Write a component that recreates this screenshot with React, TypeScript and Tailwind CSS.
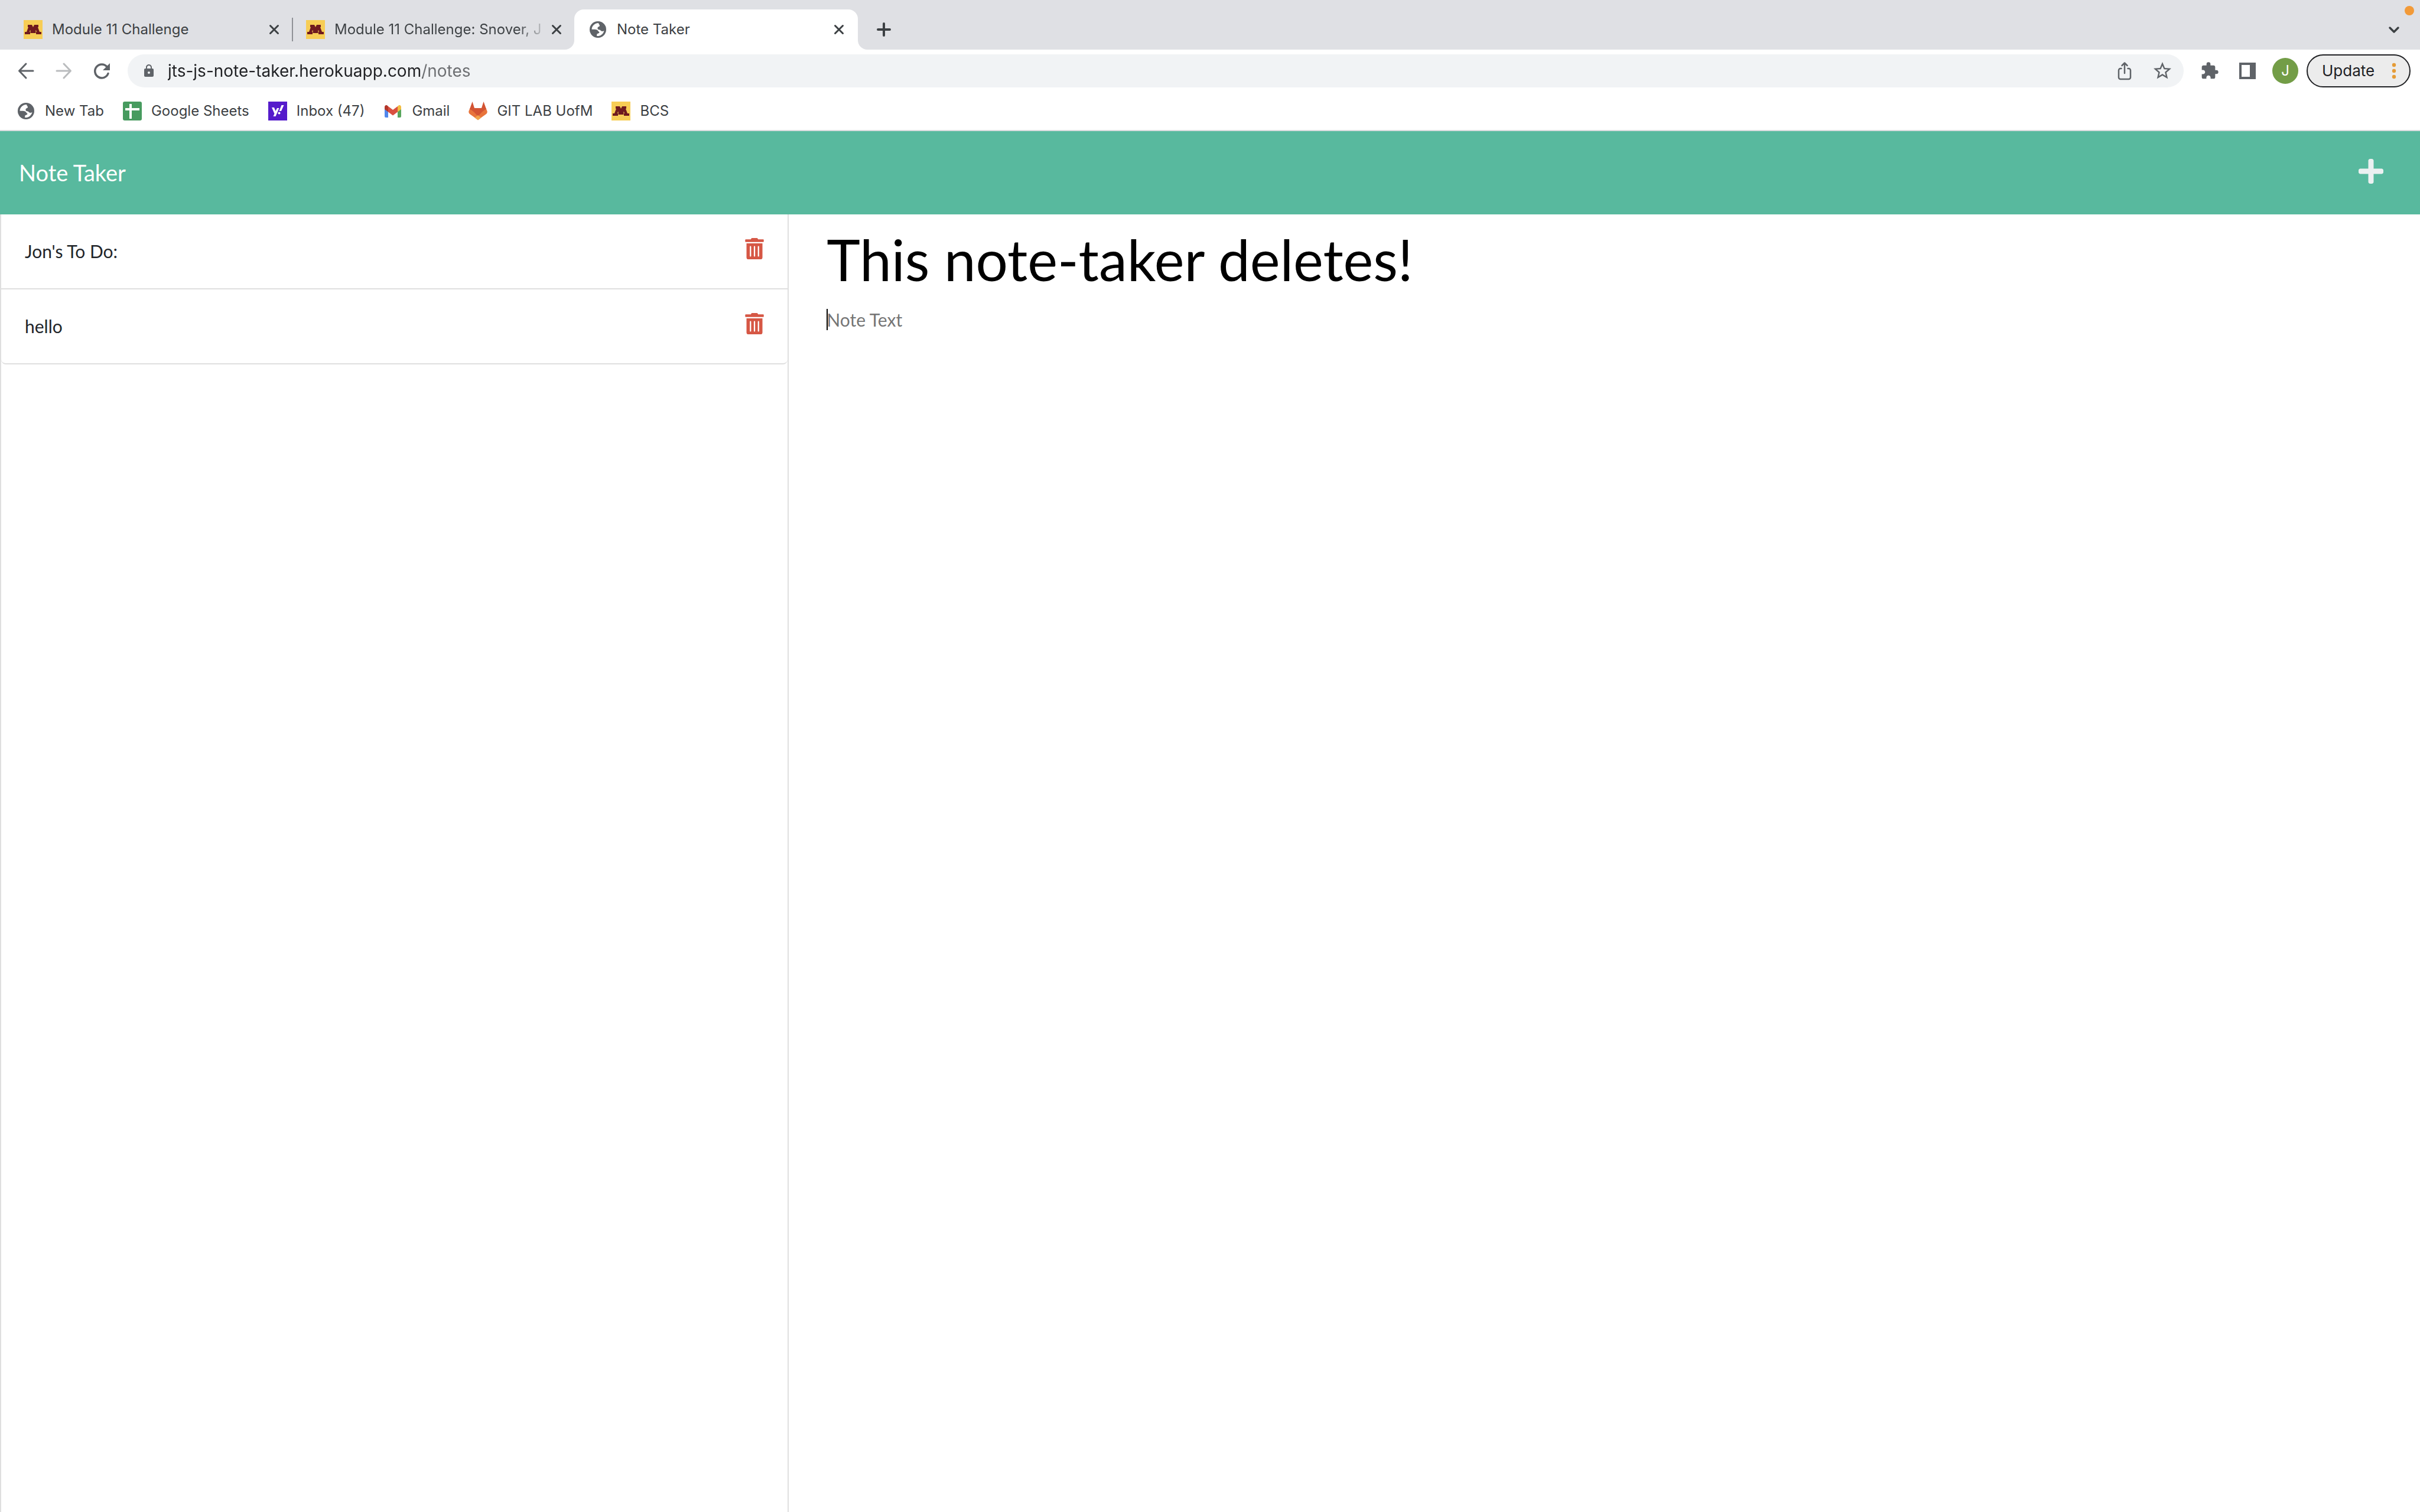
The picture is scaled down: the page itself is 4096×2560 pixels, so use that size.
import React from "react";
import { FaPlus, FaTrashAlt } from "react-icons/fa";
import { MdExtension, MdLock, MdStarBorder } from "react-icons/md";

function MFavicon() {
  return (
    <svg viewBox="0 0 32 32" className="size-8 shrink-0" aria-hidden="true">
      <rect width="32" height="32" fill="#f7cd55" />
      <path
        d="M7 8h7l2 4 2-4h7v4h-1l3 8h3v4h-9v-4h1l-1-3-.5 0V22h-9v-5L11 17l-1 3h1v4H2v-4h3l3-8H7z"
        fill="#6f1a1e"
      />
    </svg>
  );
}

function Globe() {
  return (
    <svg viewBox="0 0 32 32" className="size-8 shrink-0" aria-hidden="true">
      <circle cx="16" cy="16" r="14" fill="#5f6368" />
      <path
        d="M17 5c-6 0-11 4.500-11.500 10.500 3 .5 6-.5 9 1 2 1 2 3 4 4 0 2-3 2-4 3-.5 1 0 2-.5 3.500 6 .5 11-3 12.500-9-2 1-4.500 1.500-6-.5-.8-1.200-2.500-1-4-1.500-1.500-1-1.500-3.500 0-4.500 1-.5 2-.5 2.500-2 0-2-2-2.500-2-4.500z"
        fill="#fff"
      />
    </svg>
  );
}

function Sheets() {
  return (
    <svg viewBox="0 0 32 32" className="size-8 shrink-0" aria-hidden="true">
      <rect width="32" height="32" rx="3" fill="#479b5f" />
      <path d="M11 4h4v7h13v4H15v14h-4V15H4v-4h7z" fill="#fff" />
    </svg>
  );
}

function Yahoo() {
  return (
    <svg viewBox="0 0 32 32" className="size-8 shrink-0" aria-hidden="true">
      <rect width="32" height="32" fill="#551bcb" />
      <path d="M6 10h4l2.500 6 2.500-5h3.500l-6 14H8.500l2-4.500zM22.500 6h4L22 16h-3.500z" fill="#fff" />
      <circle cx="18.500" cy="19.500" r="2" fill="#fff" />
    </svg>
  );
}

function Gmail() {
  return (
    <svg viewBox="0 0 32 32" className="size-8 shrink-0" aria-hidden="true">
      <path d="M2 12l6 5v10H4a2 2 0 0 1-2-2z" fill="#5087ec" />
      <path d="M24 17l6-5v13a2 2 0 0 1-2 2h-4z" fill="#58a65c" />
      <path d="M8 8l8 6 8-6v9.500l-8 6-8-6z" fill="#d95040" />
      <path d="M24 8c3-4 6-1.500 6 1v4l-6 4.500z" fill="#f2bd42" />
      <path d="M8 8C5 4 2 6.500 2 9v4l6 4.500z" fill="#b3362a" />
    </svg>
  );
}

function GitLab() {
  return (
    <svg viewBox="0 0 32 32" className="size-8 shrink-0" aria-hidden="true">
      <path d="M16 31L2 21a5 5 0 0 1-1.500-5L2.500 11h27l2 5A5 5 0 0 1 30 21z" fill="#e8743b" />
      <path d="M16 25.500C12 20 8 16 2 12.500L6.500 0 10 11h12l3.500-11L30 12.500C24 16 20 20 16 25.500z" fill="#d35433" />
      <path d="M16 23l5.500 4.200L16 31.500l-5.500-4.300z" fill="#f0a24a" />
    </svg>
  );
}

function CloseButton({ label }: { label: string }) {
  return (
    <button type="button" aria-label={label} className="flex size-6 shrink-0 items-center justify-center">
      <svg viewBox="0 0 24 24" className="size-6" fill="none" stroke="#3c4043" strokeWidth="3" strokeLinecap="round">
        <path d="M5.500 5.500l13 13M18.500 5.500l-13 13" />
      </svg>
    </button>
  );
}

function Tab({ icon, title, active = false, fade = false }: { icon: React.ReactNode; title: string; active?: boolean; fade?: boolean }) {
  return (
    <div
      role="tab"
      aria-selected={active}
      className={
        active
          ? "relative flex h-full w-[480px] items-center rounded-t-2xl bg-white pr-5 pl-6"
          : "flex h-full w-[478px] items-center pr-[18px] pl-6"
      }
    >
      {active && (
        <>
          <svg viewBox="0 0 16 16" className="absolute bottom-0 -left-4 size-4" aria-hidden="true">
            <path d="M16 0v16H0A16 16 0 0 0 16 0z" fill="#fff" />
          </svg>
          <svg viewBox="0 0 16 16" className="absolute -right-4 bottom-0 size-4" aria-hidden="true">
            <path d="M0 0v16h16A16 16 0 0 1 0 0z" fill="#fff" />
          </svg>
        </>
      )}
      {icon}
      <span
        className={
          fade
            ? "ml-4 min-w-0 flex-1 bg-[linear-gradient(to_right,#3c4043_310px,transparent_362px)] bg-clip-text whitespace-nowrap text-transparent"
            : "ml-4 min-w-0 flex-1 whitespace-nowrap"
        }
      >
        {title}
      </span>
      <CloseButton label={"Close " + title} />
    </div>
  );
}

function TabStrip() {
  return (
    <div className="relative flex h-[84px] items-end bg-[#dfe0e4] pl-4">
      <div role="tablist" className="flex h-[68px] items-center">
        <Tab icon={<MFavicon />} title="Module 11 Challenge" />
        <div className="-mr-0.5 h-10 w-0.5 shrink-0 bg-[#8f9196]" />
        <Tab icon={<MFavicon />} title="Module 11 Challenge: Snover, J" fade />
        <Tab icon={<Globe />} title="Note Taker" active />
      </div>
      <button type="button" aria-label="New tab" className="ml-7 flex h-[68px] items-center">
        <svg viewBox="0 0 32 32" className="size-8" fill="none" stroke="#3c4043" strokeWidth="4" strokeLinecap="round">
          <path d="M16 6v20M6 16h20" />
        </svg>
      </button>
      <button type="button" aria-label="Search tabs" className="mr-8 ml-auto flex h-[68px] items-center">
        <svg viewBox="0 0 24 24" className="size-6" fill="none" stroke="#3c4043" strokeWidth="3.500" strokeLinecap="round" strokeLinejoin="round">
          <path d="M5 9l7 7 7-7" />
        </svg>
      </button>
      <span className="absolute top-2.5 right-2.5 size-4 rounded-full bg-[#f29a38]" />
    </div>
  );
}

function Toolbar() {
  return (
    <div className="flex h-[72px] items-center bg-white pr-4 pl-7">
      <div className="flex items-center gap-8">
        <button type="button" aria-label="Back">
          <svg viewBox="0 0 32 32" className="size-8" fill="none" stroke="#5f6368" strokeWidth="3" strokeLinecap="round" strokeLinejoin="round">
            <path d="M28 16H5M16 4L4.500 16 16 28" />
          </svg>
        </button>
        <button type="button" aria-label="Forward">
          <svg viewBox="0 0 32 32" className="size-8" fill="none" stroke="#babcbe" strokeWidth="3" strokeLinecap="round" strokeLinejoin="round">
            <path d="M4 16h23M16 4l11.500 12L16 28" />
          </svg>
        </button>
        <button type="button" aria-label="Reload">
          <svg viewBox="0 0 32 32" className="size-8" aria-hidden="true">
            <path d="M27 20.500A11.500 11.500 0 1 1 25 9" fill="none" stroke="#5f6368" strokeWidth="3.500" strokeLinecap="round" />
            <path d="M30 3v12H18z" fill="#5f6368" />
          </svg>
        </button>
      </div>
      <div className="ml-7 flex h-14 flex-1 items-center rounded-full bg-[#f1f3f5] pr-[18px] pl-6">
        <MdLock className="size-6 shrink-0 text-[#5f6368]" />
        <input
          type="text"
          aria-label="Address"
          defaultValue="jts-js-note-taker.herokuapp.com/notes"
          className="ml-5 min-w-0 flex-1 bg-[linear-gradient(to_right,#202124_431px,#6c6e71_431px)] bg-clip-text text-[28px] leading-9 text-transparent outline-none"
        />
        <button type="button" aria-label="Share" className="mr-[30px]">
          <svg viewBox="0 0 32 32" className="size-8" fill="none" stroke="#5f6368" strokeWidth="2.500" strokeLinecap="round" strokeLinejoin="round">
            <path d="M10.500 12H9a3 3 0 0 0-3 3v12a3 3 0 0 0 3 3h14a3 3 0 0 0 3-3V15a3 3 0 0 0-3-3h-1.500M16 20V3M11.500 7L16 2.500 20.500 7" />
          </svg>
        </button>
        <button type="button" aria-label="Bookmark this page">
          <MdStarBorder className="size-9 text-[#5f6368]" />
        </button>
      </div>
      <div className="ml-7 flex items-center gap-8">
        <button type="button" aria-label="Extensions">
          <MdExtension className="size-8 text-[#5f6368]" />
        </button>
        <button type="button" aria-label="Side panel">
          <svg viewBox="0 0 32 32" className="size-8" aria-hidden="true">
            <path fillRule="evenodd" d="M2 2h28v28H2zM6 6v20h14V6z" fill="#5f6368" />
          </svg>
        </button>
      </div>
      <button type="button" aria-label="Profile" className="ml-[26px] flex size-11 items-center justify-center rounded-full bg-[#739d47] text-2xl text-white">
        J
      </button>
      <button type="button" className="ml-3.5 flex h-14 w-[176px] items-center justify-between rounded-full border-2 border-[#202124] bg-[#ececec] pr-[22px] pl-6 text-[26px] text-[#202124]">
        Update
        <svg viewBox="0 0 8 28" className="h-7 w-2" fill="#e59c38" aria-hidden="true">
          <circle cx="4" cy="4" r="3.200" />
          <circle cx="4" cy="14" r="3.200" />
          <circle cx="4" cy="24" r="3.200" />
        </svg>
      </button>
    </div>
  );
}

const bookmarks = [
  { label: "New Tab", icon: <Globe /> },
  { label: "Google Sheets", icon: <Sheets /> },
  { label: "Inbox (47)", icon: <Yahoo /> },
  { label: "Gmail", icon: <Gmail /> },
  { label: "GIT LAB UofM", icon: <GitLab /> },
  { label: "BCS", icon: <MFavicon /> },
];

function BookmarksBar() {
  return (
    <nav aria-label="Bookmarks" className="flex h-[66px] items-center gap-8 border-b-2 border-[#dbdcdf] bg-white pl-7">
      {bookmarks.map((b) => (
        <a key={b.label} href="#" className="flex items-center gap-4">
          {b.icon}
          {b.label}
        </a>
      ))}
    </nav>
  );
}

const notes = ["Jon's To Do:", "hello"];

export default function App() {
  return (
    <div className="flex min-h-screen flex-col bg-white font-['Lato',sans-serif]">
      <header className="font-['Inter',sans-serif] text-2xl text-[#3c4043]">
        <TabStrip />
        <Toolbar />
        <BookmarksBar />
      </header>
      <nav className="flex h-[141px] items-center justify-between bg-[#58b99e] pr-[62px] pl-8">
        <a href="#" className="text-[38px] text-white">
          Note Taker
        </a>
        <button type="button" aria-label="New note" className="pb-1.5">
          <FaPlus className="h-12 w-[42px] text-[#ecf0f1]" />
        </button>
      </nav>
      <div className="flex flex-1">
        <div className="flex w-1/3 pr-[30px]">
          <aside className="flex-1 border-x-2 border-[#dfdfdf]">
            <ul>
              {notes.map((note) => (
                <li
                  key={note}
                  className="flex h-[127px] items-start justify-between border-b-2 border-[#dfdfdf] px-10 pt-10 last:rounded-b-lg"
                >
                  <span className="text-[30px] leading-[45px] text-[#212529]">{note}</span>
                  <button type="button" aria-label={"Delete " + note}>
                    <FaTrashAlt className="h-9 w-8 text-[#d65745]" />
                  </button>
                </li>
              ))}
            </ul>
          </aside>
        </div>
        <main className="flex w-2/3 flex-col pt-[18px] pr-8 pl-[34px]">
          <input
            type="text"
            aria-label="Note title"
            defaultValue="This note-taker deletes!"
            className="w-full text-[96px] leading-[116px] text-black outline-none"
          />
          <div className="relative mt-[22px] flex flex-1">
            <textarea
              aria-label="Note text"
              placeholder="Note Text"
              className="flex-1 resize-none text-[30px] leading-[45px] text-black placeholder-[#757575] caret-transparent outline-none"
            />
            <span className="absolute top-1 left-0 h-9 w-0.5 bg-black" />
          </div>
        </main>
      </div>
    </div>
  );
}
